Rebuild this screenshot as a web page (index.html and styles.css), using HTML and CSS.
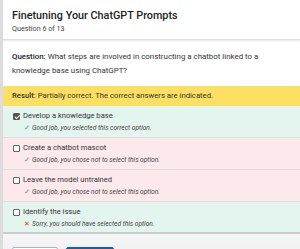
FILE: index.html
```html
<!DOCTYPE html>
<html lang="en">
<head>
    <meta charset="UTF-8">
    <meta name="viewport" content="width=device-width, initial-scale=1.0">
    <title>Quiz Result</title>
    <link rel="stylesheet" href="styles.css">
</head>
<body>
    <div class="page">
        <!-- Header -->
        <div class="header">
            <h1>Finetuning Your ChatGPT Prompts</h1>
            <div class="sub">Question 6 of 13</div>
        </div>

        <!-- Question -->
        <div class="question">
            <b>Question:</b> What steps are involved in constructing a chatbot linked to a knowledge base using ChatGPT?
        </div>

        <div class="result"><b>Result:</b> Partially correct. The correct answers are indicated.</div>

        <!-- Options -->
        <div class="option good">
            <div class="opt-label"><span class="box checked"></span>Develop a knowledge base</div>
            <div class="feedback"><span class="mark ok">&#10003;</span>Good job, you selected this correct option.</div>
        </div>
        <div class="option bad">
            <div class="opt-label"><span class="box"></span>Create a chatbot mascot</div>
            <div class="feedback"><span class="mark ok">&#10003;</span>Good job, you chose not to select this option.</div>
        </div>
        <div class="option bad">
            <div class="opt-label"><span class="box"></span>Leave the model untrained</div>
            <div class="feedback"><span class="mark ok">&#10003;</span>Good job, you chose not to select this option.</div>
        </div>
        <div class="option good last">
            <div class="opt-label"><span class="box"></span>Identify the issue</div>
            <div class="feedback"><span class="mark no">&#10005;</span>Sorry, you should have selected this option.</div>
        </div>

        <!-- Footer buttons -->
        <div class="footer">
            <button class="btn btn-outline"></button>
            <button class="btn btn-blue"></button>
        </div>
    </div>
</body>
</html>
```

FILE: styles.css
```css
* { box-sizing: border-box; }
body {
    margin: 0;
    font-family: Roboto, "Liberation Sans", sans-serif;
    color: #333;
    background: #fff;
}
.page {
    border-left: 3px solid #dcdcdc;
    height: 249px;
    overflow: hidden;
}
.header {
    height: 40px;
    padding: 9px 9px 0;
    border-bottom: 1px solid #e0e0e0;
    box-shadow: 0 1px 2px rgba(0,0,0,0.1);
}
h1 {
    margin: 0;
    font-size: 10.8px;
    font-weight: 500;
    line-height: 14px;
    color: #222;
}
.sub {
    font-size: 7.2px;
    line-height: 10px;
    margin-top: 1px;
    color: #444;
}
.question {
    height: 46px;
    padding: 10px 9px 0;
    font-size: 7.9px;
    line-height: 14px;
    color: #333;
}
.question b { font-weight: 500; color: #222; }
.result {
    background: #fddf61;
    padding: 0 9px;
    height: 20px;
    line-height: 20px;
    font-size: 7.7px;
    color: #333;
}
.result b { font-weight: 500; }
.option {
    border-bottom: 1px solid #dcdcdc;
    padding: 4px 9px 0 10px;
    height: 32px;
}
.good { background: #e4f4ee; }
.bad { background: #fde9ec; }
.option.last {
    border-bottom: 2px solid #c9cdcd;
    height: 32px;
}
.opt-label {
    display: flex;
    align-items: center;
    font-size: 7.6px;
    line-height: 12px;
    color: #333;
}
.box {
    width: 7px;
    height: 7px;
    border: 1px solid #666;
    background: #fff;
    margin-right: 3px;
    border-radius: 1px;
    position: relative;
}
.box.checked {
    background: #555;
    border-color: #555;
}
.box.checked::after {
    content: "";
    position: absolute;
    left: 1.5px;
    top: 0;
    width: 2px;
    height: 3.5px;
    border: solid #fff;
    border-width: 0 1px 1px 0;
    transform: rotate(45deg);
}
.feedback {
    margin: 1px 0 0 11px;
    font-size: 6.6px;
    font-style: italic;
    line-height: 10px;
    color: #444;
}
.mark {
    display: inline-block;
    width: 8px;
    font-style: normal;
    font-size: 6.5px;
}
.mark.ok { color: #3aa655; }
.mark.no { color: #d63a3a; }
.footer {
    background: linear-gradient(#f6f6f7, #ececee);
    height: 40px;
    padding: 13px 0 0 9px;
    display: flex;
    gap: 8px;
}
.btn {
    width: 46px;
    height: 20px;
    border-radius: 2px;
    padding: 0;
}
.btn-outline {
    background: #fff;
    border: 1px solid #9fb7cf;
}
.btn-blue {
    width: 48px;
    background: #1d5da8;
    border: 1px solid #1d5da8;
}
```
